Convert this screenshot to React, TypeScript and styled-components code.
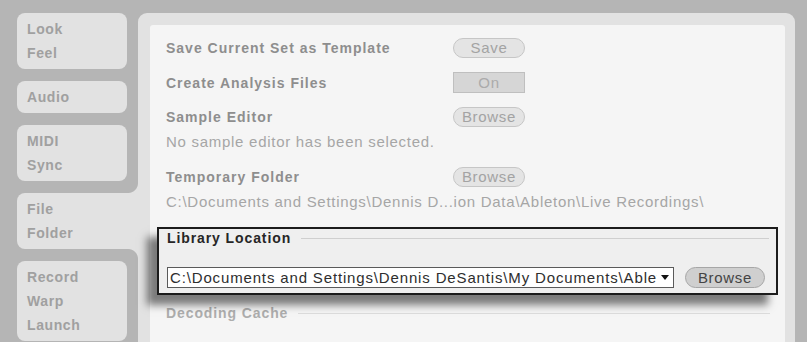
import React, { FC } from "react";
import styled, { createGlobalStyle } from "styled-components";

const GRAY = "#b5b5b5";
const FRAME = "#e2e2e2";
const FONT = `"Liberation Sans", Arial, sans-serif`;

const GlobalStyle = createGlobalStyle`
  html, body {
    margin: 0;
    padding: 0;
    background: ${GRAY};
    overflow: hidden;
  }
  body {
    font-family: ${FONT};
  }
`;

const Page = styled.div`
  display: flex;
  align-items: stretch;
  height: 100vh;
  box-sizing: border-box;
  padding: 13px 0 0 17px;
`;

// tabs on the left
const TabColumn = styled.div`
  display: flex;
  flex-direction: column;
  gap: 12px;
  width: 110px;
  flex-shrink: 0;
`;

const Tab = styled.div<{ $active?: boolean }>`
  position: relative;
  background: ${FRAME};
  border-radius: ${({ $active }) => ($active ? "8px 0 0 8px" : "8px")};
  margin-right: ${({ $active }) => ($active ? "-11px" : "0")};
  padding: 4px 10px;
  font-size: 14px;
  font-weight: bold;
  letter-spacing: 0.6px;
  line-height: 24px;
  color: #a0a0a0;

  ${({ $active }) =>
    $active &&
    `
    &::before,
    &::after {
      content: "";
      position: absolute;
      right: 0;
      width: 10px;
      height: 10px;
    }
    &::before {
      top: -10px;
      background: radial-gradient(circle at 0 0, ${GRAY} 9.5px, ${FRAME} 10.5px);
    }
    &::after {
      bottom: -10px;
      background: radial-gradient(circle at 0 100%, ${GRAY} 9.5px, ${FRAME} 10.5px);
    }
  `}
`;

// main preferences panel
const Panel = styled.div`
  margin-left: 11px;
  width: 657px;
  flex-shrink: 0;
  display: flex;
  flex-direction: column;
  background: ${FRAME};
  border-radius: 9px 9px 0 0;
  padding: 12px 10px 0 12px;
  box-sizing: border-box;
`;

const Inner = styled.div`
  flex: 1;
  display: flex;
  flex-direction: column;
  background: #f5f5f5;
  border-radius: 3px 3px 0 0;
  padding: 12px 0 0 16px;
`;

const Group = styled.div<{ $gap?: number }>`
  display: flex;
  flex-direction: column;
  margin-bottom: ${({ $gap }) => $gap ?? 14}px;
`;

const Row = styled.div`
  display: flex;
  align-items: center;
  height: 21px;
`;

const Label = styled.div`
  width: 287px;
  font-size: 14px;
  font-weight: bold;
  letter-spacing: 1px;
  color: #8e8e8e;
  white-space: nowrap;
`;

const PillButton = styled.div<{ $dark?: boolean }>`
  box-sizing: border-box;
  width: ${({ $dark }) => ($dark ? 80 : 72)}px;
  height: ${({ $dark }) => ($dark ? 21 : 20)}px;
  display: flex;
  align-items: center;
  justify-content: center;
  border-radius: 11px;
  border: 1px solid ${({ $dark }) => ($dark ? "#a6a6a6" : "#c6c6c6")};
  background: ${({ $dark }) => ($dark ? "#cfcfcf" : "#e4e4e4")};
  color: ${({ $dark }) => ($dark ? "#444" : "#a3a3a3")};
  font-size: 15px;
  letter-spacing: 0.7px;
  flex-shrink: 0;
`;

const ToggleButton = styled.div`
  box-sizing: border-box;
  width: 72px;
  height: 21px;
  display: flex;
  align-items: center;
  justify-content: center;
  border: 1px solid #bfbfbf;
  background: #d6d6d6;
  color: #ababab;
  font-size: 15px;
  letter-spacing: 0.7px;
`;

const Description = styled.div`
  margin-top: 6px;
  line-height: 18px;
  font-size: 15px;
  letter-spacing: 0.72px;
  color: #a6a6a6;
  white-space: nowrap;
`;

// highlighted library location box
const LibraryBox = styled.div`
  position: relative;
  z-index: 1;
  margin: 2px 7px 0 -9px;
  border: 2px solid #1c1c1c;
  background: #efefef;
  padding: 0 11px 5px 8px;
  box-shadow: -10px 10px 8px rgba(0, 0, 0, 0.5);
`;

const SectionHeader = styled.div<{ $faded?: boolean }>`
  display: flex;
  align-items: center;
  gap: 10px;
  height: 18px;
  font-size: 14px;
  font-weight: bold;
  letter-spacing: 0.9px;
  color: ${({ $faded }) => ($faded ? "#adadad" : "#262626")};
  white-space: nowrap;

  &::after {
    content: "";
    flex: 1;
    height: 1px;
    background: ${({ $faded }) => ($faded ? "#dcdcdc" : "#cfcfcf")};
    margin-right: ${({ $faded }) => ($faded ? "15px" : "-4px")};
  }
`;

const ControlRow = styled.div`
  display: flex;
  align-items: center;
  gap: 11px;
  margin-top: 20px;
`;

const PathSelect = styled.div`
  box-sizing: border-box;
  width: 508px;
  height: 21px;
  display: flex;
  align-items: center;
  background: #fff;
  border: 1px solid #5a5a5a;
  overflow: hidden;
`;

const SelectText = styled.span`
  flex: 1;
  overflow: hidden;
  white-space: nowrap;
  padding-left: 2px;
  font-size: 15px;
  letter-spacing: 0.85px;
  color: #2e2e2e;
`;

const Arrow = styled.span`
  width: 16px;
  display: flex;
  justify-content: center;
  flex-shrink: 0;

  &::before {
    content: "";
    border-left: 4px solid transparent;
    border-right: 4px solid transparent;
    border-top: 5px solid #111;
  }
`;

const DecodingHeader = styled(SectionHeader)`
  margin-top: 9px;
`;

const tabs = [
  { lines: ["Look", "Feel"] },
  { lines: ["Audio"] },
  { lines: ["MIDI", "Sync"] },
  { lines: ["File", "Folder"], active: true },
  { lines: ["Record", "Warp", "Launch"] },
];

const App: FC = () => (
  <>
    <GlobalStyle />
    <Page>
      <TabColumn>
        {tabs.map((t) => (
          <Tab key={t.lines[0]} $active={t.active}>
            {t.lines.map((l) => (
              <div key={l}>{l}</div>
            ))}
          </Tab>
        ))}
      </TabColumn>

      <Panel>
        <Inner>
          <Group>
            <Row>
              <Label>Save Current Set as Template</Label>
              <PillButton>Save</PillButton>
            </Row>
          </Group>
          <Group $gap={13}>
            <Row>
              <Label>Create Analysis Files</Label>
              <ToggleButton>On</ToggleButton>
            </Row>
          </Group>
          <Group $gap={15}>
            <Row>
              <Label>Sample Editor</Label>
              <PillButton>Browse</PillButton>
            </Row>
            <Description>No sample editor has been selected.</Description>
          </Group>
          <Group>
            <Row>
              <Label>Temporary Folder</Label>
              <PillButton>Browse</PillButton>
            </Row>
            <Description>
              {"C:\\Documents and Settings\\Dennis D...ion Data\\Ableton\\Live Recordings\\"}
            </Description>
          </Group>

          <LibraryBox>
            <SectionHeader>Library Location</SectionHeader>
            <ControlRow>
              <PathSelect>
                <SelectText>
                  {"C:\\Documents and Settings\\Dennis DeSantis\\My Documents\\Ableton\\Library"}
                </SelectText>
                <Arrow />
              </PathSelect>
              <PillButton $dark>Browse</PillButton>
            </ControlRow>
          </LibraryBox>

          <DecodingHeader $faded>Decoding Cache</DecodingHeader>
        </Inner>
      </Panel>
    </Page>
  </>
);

export default App;
